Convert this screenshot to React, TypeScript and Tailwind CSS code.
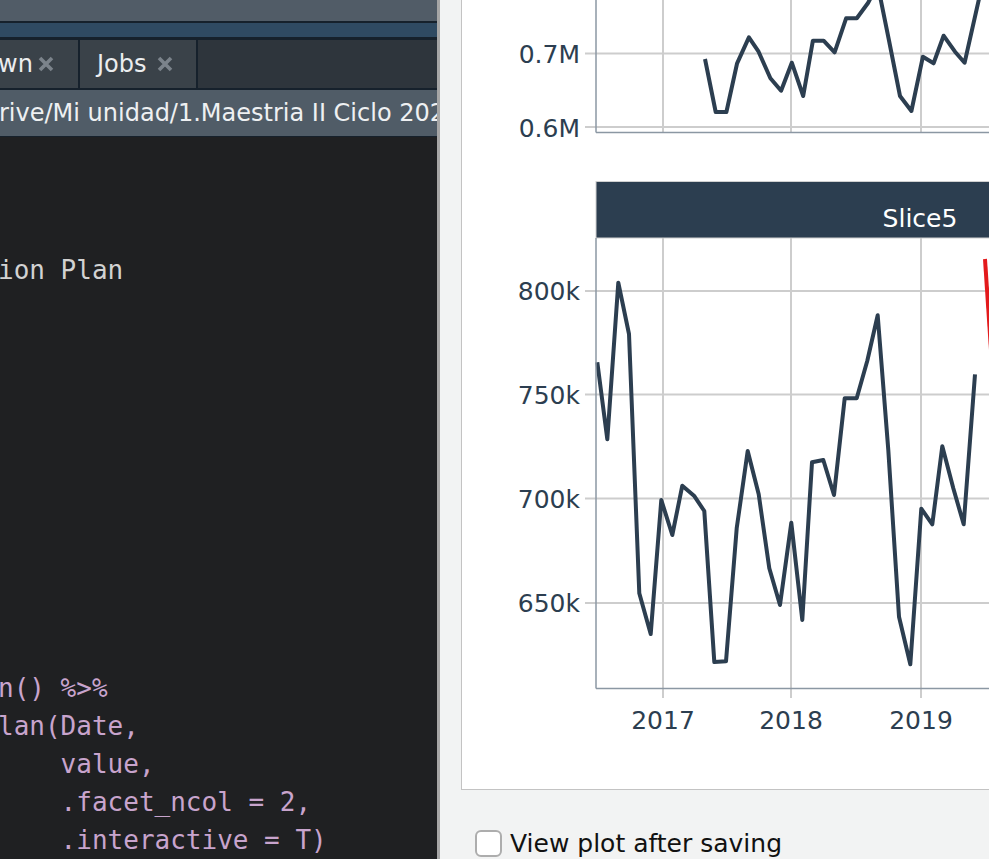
import React from "react";

const bottomPts =
  "597.3,362.3 607.3,439.3 618.3,282.7 629,334 639.3,593.3 650.7,634 661.3,500 672.3,535 682.3,485.7 694,495.7 704.3,511 714.3,662 726,661.3 736.7,528.3 747.7,451 758.7,494.3 769.3,568.3 780,605 791.3,522.7 802.3,620 812,462.3 823.3,460 834,495 844.7,398.3 856.7,398.3 867.3,360.7 877.7,315.3 888.3,450 899,616.7 910.3,664.3 921.3,508.7 932.3,524.3 942.3,446.3 953.3,488.3 963.7,524.3 975,374.3";

const topPts =
  "705,59 715.7,112 726.4,112 737.1,63.3 748.9,37.3 758.6,51.7 770.4,78.3 781.1,90.7 791.8,62.7 803.2,96 812.9,40.7 823.6,40.7 834.6,52.3 846.1,18.3 856.8,18.3 868,3 876,-12 880,-4 888.9,40 900,96 911.4,111 922.9,56.7 933.6,63.3 943.6,35.7 955,51.7 964.6,62.7 981,-10";

const GRID = "#cdcdcd";
const AXIS = "#8b97a3";
const INK = "#2c3e50";

function XIcon() {
  return (
    <svg width="18" height="18" viewBox="0 0 18 18" className="block shrink-0">
      <path d="M3 3 L15 15 M15 3 L3 15" stroke="#7b838b" strokeWidth="3.6" strokeLinecap="butt" />
    </svg>
  );
}

function Chart() {
  const vx = [663, 791, 921];
  const topH = [53.5, 127];
  const botH = [
    { y: 291, t: "800k" },
    { y: 394.5, t: "750k" },
    { y: 498.5, t: "700k" },
    { y: 603, t: "650k" },
  ];
  return (
    <svg
      width="600"
      height="789"
      viewBox="462 0 600 789"
      className="block"
      style={{ fontFamily: '"DejaVu Sans", Verdana, sans-serif' }}
    >
      {/* top panel */}
      {vx.map((x) => (
        <line key={"tv" + x} x1={x} y1={0} x2={x} y2={132} stroke={GRID} strokeWidth={2} />
      ))}
      {topH.map((y) => (
        <g key={"th" + y}>
          <line x1={596} y1={y} x2={1062} y2={y} stroke={GRID} strokeWidth={2} />
          <line x1={585} y1={y} x2={596} y2={y} stroke={GRID} strokeWidth={2} />
        </g>
      ))}
      <text x={580} y={63} textAnchor="end" fontSize={25} fill={INK}>0.7M</text>
      <text x={580} y={137} textAnchor="end" fontSize={25} fill={INK}>0.6M</text>
      <polyline points={topPts} fill="none" stroke={INK} strokeWidth={4} strokeLinejoin="round" />
      <line x1={596} y1={0} x2={596} y2={132.5} stroke={AXIS} strokeWidth={1.5} />
      <line x1={596} y1={132.5} x2={1062} y2={132.5} stroke={AXIS} strokeWidth={1.5} />

      {/* strip */}
      <rect x={596} y={181.5} width={470} height={56.5} fill={INK} stroke="#d0d0d0" strokeWidth={1} />
      <text x={920} y={227} textAnchor="middle" fontSize={25} fill="#ffffff">Slice5</text>

      {/* bottom panel */}
      {vx.map((x) => (
        <g key={"bv" + x}>
          <line x1={x} y1={238} x2={x} y2={688} stroke={GRID} strokeWidth={2} />
          <line x1={x} y1={689} x2={x} y2={698} stroke={GRID} strokeWidth={2} />
        </g>
      ))}
      {botH.map((h) => (
        <g key={h.t}>
          <line x1={596} y1={h.y} x2={1062} y2={h.y} stroke={GRID} strokeWidth={2} />
          <line x1={585} y1={h.y} x2={596} y2={h.y} stroke={GRID} strokeWidth={2} />
          <text x={580} y={h.y + 9} textAnchor="end" fontSize={25} fill={INK}>{h.t}</text>
        </g>
      ))}
      <text x={663} y={729} textAnchor="middle" fontSize={25} fill={INK}>2017</text>
      <text x={791} y={729} textAnchor="middle" fontSize={25} fill={INK}>2018</text>
      <text x={921} y={729} textAnchor="middle" fontSize={25} fill={INK}>2019</text>
      <polyline points={bottomPts} fill="none" stroke={INK} strokeWidth={4} strokeLinejoin="round" />
      <line x1={985} y1={259} x2={991} y2={350} stroke="#e31a1c" strokeWidth={4} />
      <line x1={596} y1={238} x2={596} y2={688.5} stroke={AXIS} strokeWidth={1.5} />
      <line x1={596} y1={688.5} x2={1062} y2={688.5} stroke={AXIS} strokeWidth={1.5} />
    </svg>
  );
}

export default function App() {
  const lines: { t: string; c?: string }[] = [
    { t: "" },
    { t: "" },
    { t: "" },
    { t: "ion Plan", c: "text-[#d2d2d2]" },
    { t: "" },
    { t: "" },
    { t: "" },
    { t: "" },
    { t: "" },
    { t: "" },
    { t: "" },
    { t: "" },
    { t: "" },
    { t: "" },
    { t: "n() %>%" },
    { t: "lan(Date," },
    { t: "    value," },
    { t: "    .facet_ncol = 2," },
    { t: "    .interactive = T)" },
  ];
  return (
    <div className="w-[989px] h-[859px] flex overflow-hidden bg-[#f2f3f3]">
      {/* left: RStudio editor */}
      <div className="w-[437px] shrink-0 flex flex-col bg-[#1f2022] overflow-hidden">
        <div className="h-[21px] bg-[#515c67]" />
        <div className="h-[2px] bg-[#16212c]" />
        <div className="h-[14px] bg-[#2f4a62]" />
        <div className="h-[3px] bg-[#16212c]" />
        <div
          className="h-[48px] bg-[#2e353c] flex text-[24px] text-[#ebedef]"
          style={{ fontFamily: '"DejaVu Sans", sans-serif' }}
        >
          <div className="w-[78px] bg-[#3a4249] flex items-center overflow-hidden">
            <span className="ml-[-2px]">wn</span>
            <span className="ml-[4px]"><XIcon /></span>
          </div>
          <div className="w-[2px] bg-[#16212c]" />
          <div className="w-[116px] bg-[#3a4249] flex items-center pl-[17px]">
            <span>Jobs</span>
            <span className="ml-[9px]"><XIcon /></span>
          </div>
          <div className="w-[2px] bg-[#16212c]" />
        </div>
        <div className="h-[2px] bg-[#16212c]" />
        <div
          className="h-[46px] bg-[#505c67] flex items-center whitespace-nowrap overflow-hidden text-[24px] text-[#eef0f2]"
          style={{ fontFamily: '"DejaVu Sans", sans-serif' }}
        >
          <span className="ml-[-1px]">rive/Mi unidad/1.Maestria II Ciclo 2020</span>
        </div>
        <div className="h-[1px] bg-[#16212c]" />
        <div
          className="flex-1 text-[26px] leading-[38px] text-[#c8a4cd] whitespace-pre"
          style={{ fontFamily: '"DejaVu Sans Mono", monospace' }}
        >
          {lines.map((l, i) => (
            <div key={i} className={"h-[38px] ml-[-2px] " + (l.c ?? "")}>
              {l.t}
            </div>
          ))}
        </div>
      </div>
      {/* divider */}
      <div className="w-[3px] shrink-0 bg-[#a6a6a6]" />
      {/* right: save plot dialog */}
      <div className="flex-1 flex flex-col overflow-hidden bg-[#f2f3f3]">
        <div className="ml-[21px] w-[600px] h-[790px] shrink-0 bg-white border-l border-r border-b border-[#c3c3c3] overflow-hidden">
          <Chart />
        </div>
        <div
          className="flex items-center pl-[35px] pt-[40px] gap-[8px] whitespace-nowrap"
          style={{ fontFamily: '"DejaVu Sans", sans-serif' }}
        >
          <div className="w-[27px] h-[27px] shrink-0 rounded-[6px] border-2 border-[#adadad] bg-white" />
          <span className="text-[25px] leading-[27px] text-[#111111]">View plot after saving</span>
        </div>
      </div>
    </div>
  );
}
